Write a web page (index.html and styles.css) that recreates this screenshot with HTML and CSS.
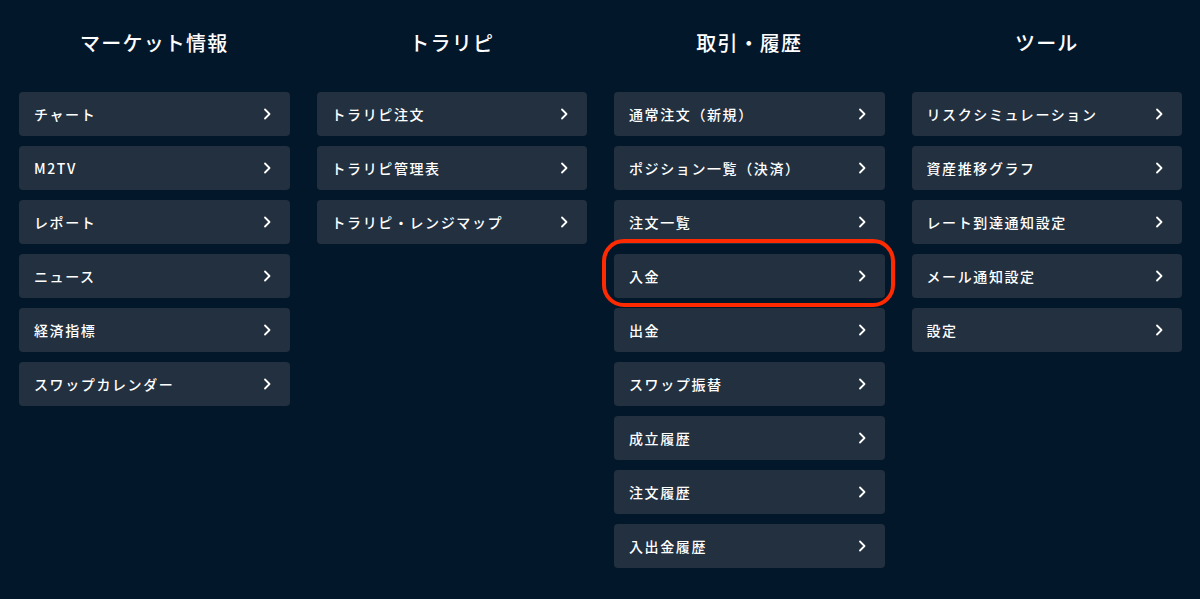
FILE: index.html
```html
<!DOCTYPE html>
<html lang="ja">
<head>
<meta charset="utf-8">
<link rel="stylesheet" href="styles.css">
</head>
<body>
<div class="menu">
  <section class="col">
    <h2 class="col-title">マーケット情報</h2>
    <ul class="list">
      <li class="item"><span>チャート</span><svg class="chev" viewBox="0 0 8 12"><path d="M2 1.5 L6.5 6 L2 10.5"/></svg></li>
      <li class="item"><span>M2TV</span><svg class="chev" viewBox="0 0 8 12"><path d="M2 1.5 L6.5 6 L2 10.5"/></svg></li>
      <li class="item"><span>レポート</span><svg class="chev" viewBox="0 0 8 12"><path d="M2 1.5 L6.5 6 L2 10.5"/></svg></li>
      <li class="item"><span>ニュース</span><svg class="chev" viewBox="0 0 8 12"><path d="M2 1.5 L6.5 6 L2 10.5"/></svg></li>
      <li class="item"><span>経済指標</span><svg class="chev" viewBox="0 0 8 12"><path d="M2 1.5 L6.5 6 L2 10.5"/></svg></li>
      <li class="item"><span>スワップカレンダー</span><svg class="chev" viewBox="0 0 8 12"><path d="M2 1.5 L6.5 6 L2 10.5"/></svg></li>
    </ul>
  </section>
  <section class="col">
    <h2 class="col-title">トラリピ</h2>
    <ul class="list">
      <li class="item"><span>トラリピ注文</span><svg class="chev" viewBox="0 0 8 12"><path d="M2 1.5 L6.5 6 L2 10.5"/></svg></li>
      <li class="item"><span>トラリピ管理表</span><svg class="chev" viewBox="0 0 8 12"><path d="M2 1.5 L6.5 6 L2 10.5"/></svg></li>
      <li class="item"><span>トラリピ・レンジマップ</span><svg class="chev" viewBox="0 0 8 12"><path d="M2 1.5 L6.5 6 L2 10.5"/></svg></li>
    </ul>
  </section>
  <section class="col">
    <h2 class="col-title">取引・履歴</h2>
    <ul class="list">
      <li class="item"><span>通常注文（新規）</span><svg class="chev" viewBox="0 0 8 12"><path d="M2 1.5 L6.5 6 L2 10.5"/></svg></li>
      <li class="item"><span>ポジション一覧（決済）</span><svg class="chev" viewBox="0 0 8 12"><path d="M2 1.5 L6.5 6 L2 10.5"/></svg></li>
      <li class="item"><span>注文一覧</span><svg class="chev" viewBox="0 0 8 12"><path d="M2 1.5 L6.5 6 L2 10.5"/></svg></li>
      <li class="item highlighted"><span>入金</span><svg class="chev" viewBox="0 0 8 12"><path d="M2 1.5 L6.5 6 L2 10.5"/></svg></li>
      <li class="item"><span>出金</span><svg class="chev" viewBox="0 0 8 12"><path d="M2 1.5 L6.5 6 L2 10.5"/></svg></li>
      <li class="item"><span>スワップ振替</span><svg class="chev" viewBox="0 0 8 12"><path d="M2 1.5 L6.5 6 L2 10.5"/></svg></li>
      <li class="item"><span>成立履歴</span><svg class="chev" viewBox="0 0 8 12"><path d="M2 1.5 L6.5 6 L2 10.5"/></svg></li>
      <li class="item"><span>注文履歴</span><svg class="chev" viewBox="0 0 8 12"><path d="M2 1.5 L6.5 6 L2 10.5"/></svg></li>
      <li class="item"><span>入出金履歴</span><svg class="chev" viewBox="0 0 8 12"><path d="M2 1.5 L6.5 6 L2 10.5"/></svg></li>
    </ul>
  </section>
  <section class="col">
    <h2 class="col-title">ツール</h2>
    <ul class="list">
      <li class="item"><span>リスクシミュレーション</span><svg class="chev" viewBox="0 0 8 12"><path d="M2 1.5 L6.5 6 L2 10.5"/></svg></li>
      <li class="item"><span>資産推移グラフ</span><svg class="chev" viewBox="0 0 8 12"><path d="M2 1.5 L6.5 6 L2 10.5"/></svg></li>
      <li class="item"><span>レート到達通知設定</span><svg class="chev" viewBox="0 0 8 12"><path d="M2 1.5 L6.5 6 L2 10.5"/></svg></li>
      <li class="item"><span>メール通知設定</span><svg class="chev" viewBox="0 0 8 12"><path d="M2 1.5 L6.5 6 L2 10.5"/></svg></li>
      <li class="item"><span>設定</span><svg class="chev" viewBox="0 0 8 12"><path d="M2 1.5 L6.5 6 L2 10.5"/></svg></li>
    </ul>
  </section>
</div>
</body>
</html>
```
FILE: styles.css
```css
html, body {
  margin: 0;
  padding: 0;
  background: #03172b;
  height: 100%;
  overflow: hidden;
}
body {
  font-family: "Noto Sans CJK JP", "Noto Sans", sans-serif;
  color: #ffffff;
}
.menu {
  display: grid;
  grid-template-columns: repeat(4, 1fr);
  column-gap: 27px;
  padding: 0 18px 0 19px;
}
.col {
  display: flex;
  flex-direction: column;
}
.col-title {
  margin: 0;
  padding-top: 30px;
  height: 92px;
  box-sizing: border-box;
  text-align: center;
  font-size: 20px;
  line-height: 26px;
  font-weight: 500;
  letter-spacing: 1.2px;
}
.list {
  list-style: none;
  margin: 0;
  padding: 0;
  display: flex;
  flex-direction: column;
  gap: 10px;
}
.item {
  position: relative;
  height: 44px;
  background: #22303f;
  border-radius: 4px;
  display: flex;
  align-items: center;
  justify-content: space-between;
  padding: 0 19px 0 15px;
  font-size: 14px;
  font-weight: 500;
  letter-spacing: 1.6px;
}
.chev {
  width: 8px;
  height: 12px;
  fill: none;
  stroke: #ffffff;
  stroke-width: 1.8;
  stroke-linecap: round;
  stroke-linejoin: round;
}
.highlighted::after {
  content: "";
  position: absolute;
  left: -12px;
  right: -10px;
  top: -15px;
  bottom: -9px;
  border: 4px solid #ff2a00;
  border-radius: 22px;
  pointer-events: none;
}
```
